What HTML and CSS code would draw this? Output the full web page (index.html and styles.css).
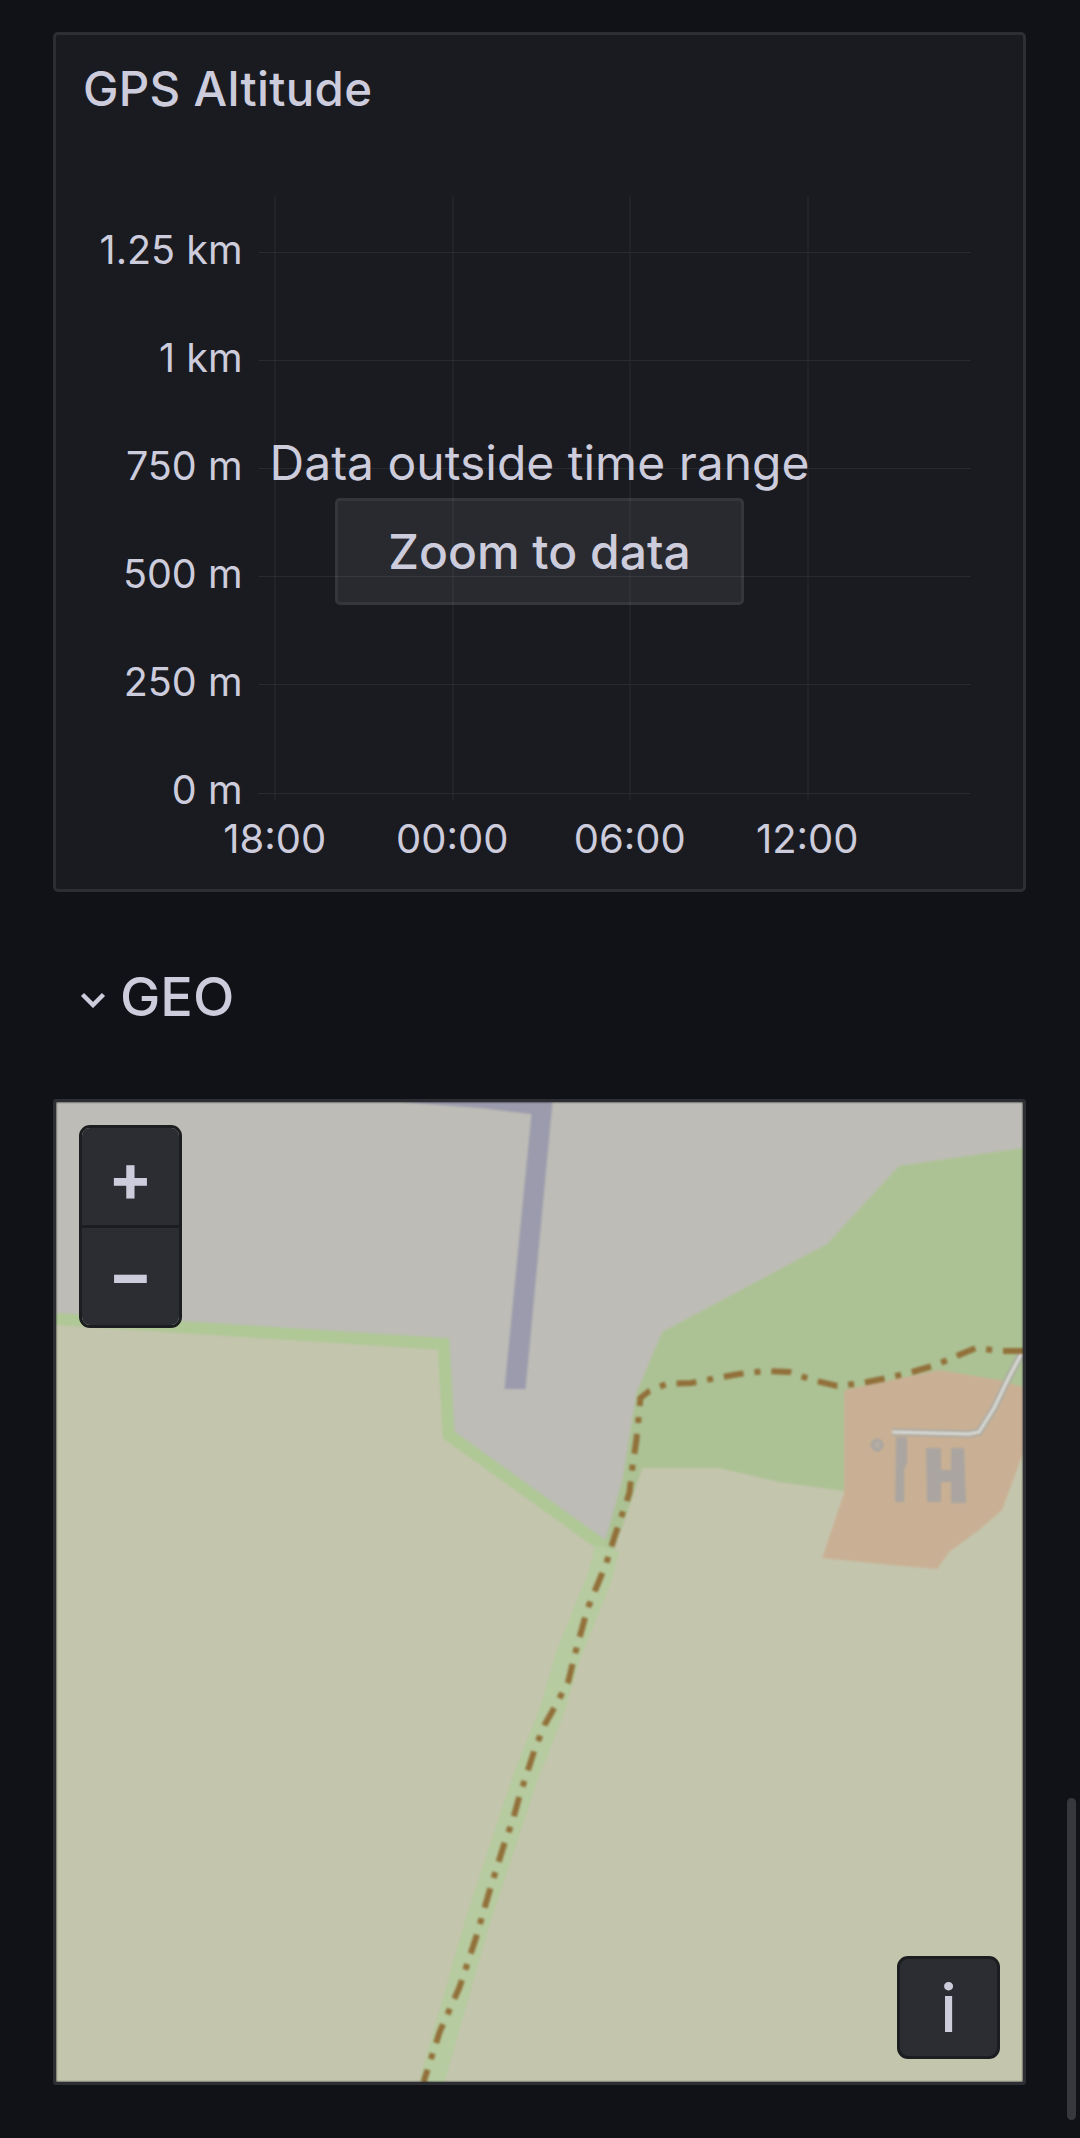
FILE: index.html
```html
<!DOCTYPE html>
<html lang="en">
<head>
<meta charset="utf-8">
<title>GPS Altitude</title>
<link rel="stylesheet" href="styles.css">
</head>
<body>
<main class="page">
  <section class="panel">
    <h2 class="panel-title">GPS Altitude</h2>
    <div class="chart">
      <svg class="grid" viewBox="57 196 966 695" aria-hidden="true">
        <g class="grid-lines">
          <path d="M259 252.5H971M259 360.5H971M259 468.5H971M259 576.5H971M259 684.5H971M259 793.5H971"/>
          <path d="M275.5 196V800M453.5 196V800M630.5 196V800M808.5 196V800"/>
        </g>
      </svg>
      <div class="y-axis">
        <span>1.25 km</span>
        <span>1 km</span>
        <span>750 m</span>
        <span>500 m</span>
        <span>250 m</span>
        <span>0 m</span>
      </div>
      <div class="x-axis">
        <span>18:00</span>
        <span>00:00</span>
        <span>06:00</span>
        <span>12:00</span>
      </div>
      <div class="no-data">
        <p class="no-data-text">Data outside time range</p>
        <button class="zoom-btn" type="button">Zoom to data</button>
      </div>
    </div>
  </section>

  <h2 class="row-title">
    <svg class="chevron" viewBox="0 0 26 16" aria-hidden="true"><path d="M2.5 2.5 13 13 23.5 2.5"/></svg>
    <span>GEO</span>
  </h2>

  <section class="map">
    <svg class="tiles" viewBox="56 1102 968 980" preserveAspectRatio="none" aria-hidden="true">
      <rect class="land" x="56" y="1102" width="968" height="980"/>
      <polygon class="gray" points="56,1102 1024,1102 1024,1148 900,1166 828,1244 663,1332 637,1393 623,1480 607,1548 449,1435 444,1344 56,1319"/>
      <polygon class="runway" points="400,1102 553,1102 526,1389 505,1389 532,1114 480,1108"/>
      <polygon class="green" points="663,1332 828,1244 900,1166 1024,1148 1024,1400 845,1400 845,1491 780,1482 720,1468 643,1468 623,1527 612,1556 604,1547 623,1480 637,1393"/>
      <polygon class="orange" points="845,1390 940,1370 1000,1380 1024,1387 1024,1453 1003,1510 980,1530 950,1552 938,1569 893,1565 823,1558 845,1493"/>
      <polyline class="strip" points="56,1319 444,1344 449,1435 608,1549"/>
      <polyline class="strip wide" points="608,1548 600,1578 569,1655 552,1712 526,1777 478,1922 432,2082"/>
      <polygon class="building" points="897,1437 908,1437 908,1462 905,1470 905,1502 896,1502"/>
      <polygon class="building" points="927,1448 942,1448 942,1470 952,1470 952,1448 965,1448 967,1503 952,1503 952,1482 942,1482 942,1502 928,1502"/>
      <circle class="hut" cx="878" cy="1445" r="5"/>
      <polyline class="track-case" points="893,1432 970,1434 980,1432 995,1408 1010,1377 1024,1351"/>
      <polyline class="track-core" points="893,1432 970,1434 980,1432 995,1408 1010,1377 1024,1351"/>
      <polyline class="path" points="1024,1351 1000,1351 977,1348 960,1355 937,1365 913,1372 888,1378 863,1383 838,1386 813,1380 790,1372 765,1371 740,1374 717,1378 692,1383 667,1384 650,1391 641,1398 640,1410 637,1440 633,1467 630,1493 615,1537 607,1563 588,1609 575,1656 569,1681 557,1704 545,1725 535,1750 520,1796 513,1821 505,1843 490,1891 476,1939 460,1987 440,2032 424,2082"/>
    </svg>
    <div class="zoom-control">
      <button class="map-btn plus" type="button">+</button>
      <button class="map-btn minus" type="button">−</button>
    </div>
    <button class="map-btn attribution" type="button">i</button>
  </section>
</main>
<div class="scrollbar"></div>
</body>
</html>
```
FILE: styles.css
```css
* { box-sizing: border-box; }
html, body { margin: 0; height: 100%; }
body {
  background: #111217;
  color: #ccccdc;
  font-family: Inter, "Noto Sans", sans-serif;
  overflow: hidden;
  position: relative;
}
.page { padding: 32px 54px 0 53px; }

.panel {
  height: 860px;
  background: #1a1b20;
  border: 3px solid #2d2e34;
  border-radius: 5px;
}
.panel-title {
  margin: 0;
  padding: 27px 0 80px 27px;
  font-size: 47.5px;
  line-height: 54px;
  font-weight: 450;
  letter-spacing: 0.3px;
}
.chart { position: relative; height: 695px; }
.grid { position: absolute; inset: 0; width: 100%; height: 100%; }
.grid-lines path { stroke: #2a2b30; stroke-width: 1; fill: none; }
.y-axis {
  position: relative;
  display: flex;
  flex-direction: column;
  width: 186.5px;
  font-size: 39.5px;
  text-align: right;
}
.y-axis span { height: 108px; line-height: 108px; }
.x-axis {
  position: absolute;
  left: 130px;
  top: 616px;
  display: flex;
  font-size: 40px;
  line-height: 54px;
}
.x-axis span { width: 177.5px; text-align: center; }
.no-data {
  position: absolute;
  left: 0;
  right: 0;
  top: 236px;
  display: flex;
  flex-direction: column;
  align-items: center;
}
.no-data-text { margin: 0; font-size: 48px; line-height: 62px; }
.zoom-btn {
  width: 409px;
  height: 107px;
  margin-top: 4px;
  background: rgba(204, 204, 204, 0.09);
  border: 3px solid rgba(204, 204, 220, 0.08);
  border-radius: 5px;
  color: inherit;
  font: 500 48px Inter, sans-serif;
}

.row-title {
  display: flex;
  align-items: flex-start;
  gap: 14px;
  margin: 0;
  padding: 69px 0 0 27px;
  height: 207px;
  font-size: 54px;
  font-weight: 450;
  line-height: 72px;
}
.chevron { width: 26px; height: 16px; margin-top: 31px; fill: none; stroke: #ccccdc; stroke-width: 4.4; }

.map {
  position: relative;
  height: 986px;
  border: 3px solid #2d2e34;
  border-radius: 3px;
  overflow: hidden;
}
.tiles { display: block; width: 100%; height: 100%; filter: blur(1px); }
.land { fill: #c4c5ad; }
.gray { fill: #bdbcb6; }
.runway { fill: #9b9bad; }
.green { fill: #acc294; }
.orange { fill: #c9b094; }
.strip { fill: none; stroke: #afc896; stroke-width: 12; }
.strip.wide { stroke-width: 25; stroke: #b6cb9f; }
.building { fill: #aaa5a0; }
.hut { fill: #b3ada5; stroke: #aaa5a0; stroke-width: 3; }
.track-case { fill: none; stroke: #a9a9a3; stroke-width: 7; }
.track-core { fill: none; stroke: #dcdcd6; stroke-width: 3; }
.path { fill: none; stroke: #92703a; stroke-width: 6; stroke-dasharray: 20 11 6 11; }

.map-btn {
  display: block;
  width: 103px;
  height: 103px;
  padding: 0;
  background: #2c2d33;
  border: 0;
  color: #ccccdc;
  font: 700 66px Inter, sans-serif;
}
.zoom-control {
  position: absolute;
  left: 23px;
  top: 23px;
  width: 103px;
  border: 3px solid #1c1d20;
  border-radius: 11px;
  overflow: hidden;
}
.zoom-control .map-btn { width: 100%; height: 97px; }
.zoom-control .map-btn.minus { border-top: 3px solid #1c1d20; height: 100px; padding-bottom: 6px; }
.attribution {
  position: absolute;
  right: 23px;
  bottom: 23px;
  border: 3px solid #1c1d20;
  border-radius: 11px;
  font-weight: 500;
}

.scrollbar {
  position: absolute;
  left: 1067px;
  top: 1798px;
  width: 9px;
  height: 322px;
  border-radius: 5px;
  background: #37383d;
}
```
